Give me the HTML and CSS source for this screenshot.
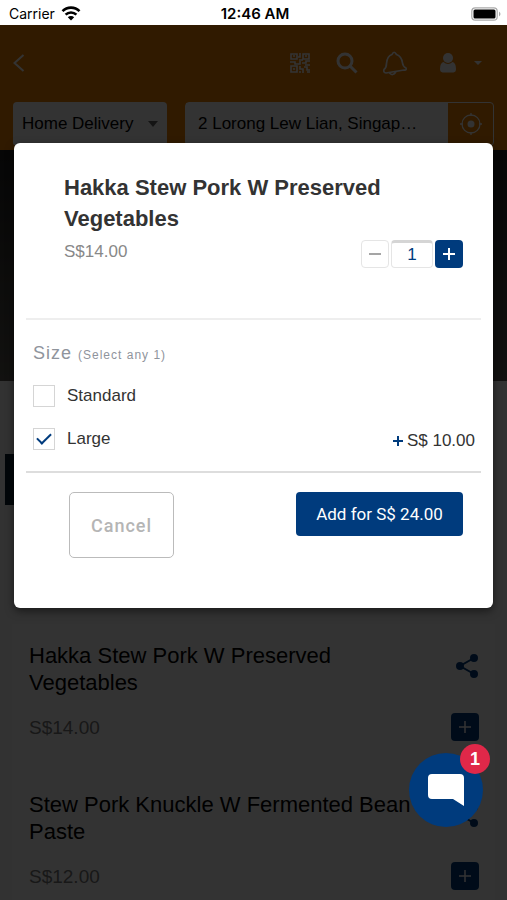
FILE: index.html
```
<!DOCTYPE html>
<html lang="en">
<head>
<meta charset="utf-8">
<meta name="viewport" content="width=device-width, initial-scale=1">
<title>Hakka Stew Pork W Preserved Vegetables</title>
<link rel="stylesheet" href="styles.css">
</head>
<body>
<div class="status">
  <div class="carrier">Carrier
    <svg width="20" height="15" viewBox="0 0 20 15" fill="none" stroke="#000" stroke-width="2.6"><path d="M1.5 5.2a12 12 0 0 1 17 0M4.6 8.6a7.8 7.8 0 0 1 10.800 0"/><path d="M10 14.500l-3.200-3.300a4.600 4.600 0 0 1 6.400 0z" fill="#000" stroke="none"/></svg>
  </div>
  <div class="clock">12:46 AM</div>
  <svg class="battery" width="30" height="14" viewBox="0 0 30 14"><rect x=".8" y=".8" width="25.400" height="12.400" rx="3.500" fill="#fff" stroke="#aaa" stroke-width="1.200"/><rect x="2.500" y="2.500" width="22" height="9" rx="1.500"/><path d="M28 4.500q3 2.500 0 5z" fill="#aaa"/></svg>
</div>
<div class="screen">
  <header class="header">
    <div class="nav">
      <button class="icon" aria-label="Back"><svg width="12" height="18" viewBox="0 0 12 18" fill="none" stroke="#fff" stroke-width="2"><path d="M10.500 1L1.500 9l9 8"/></svg></button>
      <div class="tools">
        <button class="icon" aria-label="Scan code"><svg width="20" height="20" viewBox="0 0 20 20" fill="none" stroke="#fff" stroke-width="1.600"><path d="M1 1h6v5H1zM13 1h6v5h-6zM1 13h6v6H1zM10 0v4H8M9 7h4M0 9h5v2h5V8M12 10h4V8h4M15 12h5M10 13v3h3v4M14 14h3v3h3M9 19h2M17 19h3M3 3h2M15 3h2M3 16h2"/></svg></button>
        <button class="icon" aria-label="Search"><svg width="22" height="22" viewBox="0 0 22 22" fill="none" stroke="#fff" stroke-width="3"><circle cx="9" cy="9" r="7"/><path d="M14 14l6.500 6.500"/></svg></button>
        <button class="icon" aria-label="Notifications"><svg width="26" height="26" viewBox="0 0 26 26" fill="none" stroke="#fff" stroke-width="1.700" stroke-linejoin="round"><path d="M10 4.500q2-4.500 4.500 0c4.500 1.500 5.500 5 6 8.500.3 3 1.500 4 3.500 5q1 2.500-2 2L4 23q-3-.5-2-3.500c2-1.500 2.500-3 2.500-6 .3-4 1-7.500 5.500-9zM7.500 23q3 3.500 6.500-1"/></svg></button>
        <button class="icon account" aria-label="Account"><svg width="16" height="20" viewBox="0 0 16 20" fill="#fff"><circle cx="8" cy="5" r="5"/><path d="M3.500 9q4.500 4 9 0Q16 10 16 16q0 3-2.500 3.500h-11Q0 19 0 16q0-6 3.500-7z"/></svg><svg width="8" height="4" viewBox="0 0 8 4" fill="#fff"><path d="M0 0h8L4 4z"/></svg></button>
      </div>
    </div>
    <div class="fields">
      <button class="mode">Home Delivery<svg width="10" height="6" viewBox="0 0 10 6" fill="#666"><path d="M0 0h10L5 6z"/></svg></button>
      <div class="place">
        <input class="address" aria-label="Delivery address" value="2 Lorong Lew Lian, Singap…">
        <button class="locate" aria-label="Locate me"><svg width="24" height="24" viewBox="0 0 24 24" fill="none" stroke="#fff" stroke-width="1.300"><circle cx="12" cy="12" r="9"/><path d="M12 1v3M12 20v3M1 12h3M20 12h3"/><circle cx="12" cy="12" r="3.500" fill="#fff" stroke="none"/></svg></button>
      </div>
    </div>
  </header>
  <div class="hero"></div>
  <div class="category"></div>
  <main class="menu">
    <article class="item">
      <h3>Hakka Stew Pork W Preserved Vegetables</h3>
      <button class="icon share" aria-label="Share"><svg width="24" height="24" viewBox="0 0 24 24" fill="#003b7d" stroke="#003b7d" stroke-width="2"><path d="M19 4L5 12l14 8" fill="none"/><circle cx="19" cy="4" r="3"/><circle cx="5" cy="12" r="3"/><circle cx="19" cy="20" r="3"/></svg></button>
      <p>S$14.00</p>
      <button class="square add" aria-label="Add"><svg width="12" height="12" viewBox="0 0 12 12" stroke="#fff" stroke-width="1.500"><path d="M6 0v12M0 6h12"/></svg></button>
    </article>
    <article class="item">
      <h3>Stew Pork Knuckle W Fermented Bean Paste</h3>
      <button class="icon share" aria-label="Share"><svg width="24" height="24" viewBox="0 0 24 24" fill="#003b7d" stroke="#003b7d" stroke-width="2"><path d="M19 4L5 12l14 8" fill="none"/><circle cx="19" cy="4" r="3"/><circle cx="5" cy="12" r="3"/><circle cx="19" cy="20" r="3"/></svg></button>
      <p>S$12.00</p>
      <button class="square add" aria-label="Add"><svg width="12" height="12" viewBox="0 0 12 12" stroke="#fff" stroke-width="1.500"><path d="M6 0v12M0 6h12"/></svg></button>
    </article>
  </main>
  <div class="backdrop"></div>
</div>

<form class="modal" role="dialog" aria-labelledby="dish">
  <div class="intro">
    <h2 id="dish">Hakka Stew Pork W Preserved Vegetables</h2>
    <div class="pricing">
      <span class="price">S$14.00</span>
      <div class="stepper">
        <button type="button" class="square minus" aria-label="Decrease"><svg width="12" height="12" viewBox="0 0 12 12" stroke="#a5a5a5" stroke-width="2"><path d="M0 6h12"/></svg></button>
        <input class="count" aria-label="Quantity" value="1">
        <button type="button" class="square" aria-label="Increase"><svg width="12" height="12" viewBox="0 0 12 12" stroke="#fff" stroke-width="2"><path d="M6 0v12M0 6h12"/></svg></button>
      </div>
    </div>
  </div>
  <fieldset class="options">
    <legend>Size <small>(Select any 1)</small></legend>
    <label class="option"><input type="checkbox"><span>Standard</span></label>
    <label class="option"><input type="checkbox" checked><span>Large</span><span class="extra"><svg width="10" height="10" viewBox="0 0 10 10" stroke="#003b7d" stroke-width="2"><path d="M5 0v10M0 5h10"/></svg>S$ 10.00</span></label>
  </fieldset>
  <div class="actions">
    <button type="button" class="cancel">Cancel</button>
    <button type="button" class="submit">Add for S$ 24.00</button>
  </div>
</form>

<button class="chat" aria-label="Chat, 1 new message"><svg width="38" height="34" viewBox="0 0 38 34" fill="#fff"><path d="M5 1h28q4 0 4 4v28L26 26H5q-4 0-4-4V5q0-4 4-4z"/></svg><span class="badge">1</span></button>
</body>
</html>
```
FILE: styles.css
```
* { box-sizing: border-box; margin: 0; }
body {
  min-height: 100vh;
  display: flex;
  flex-direction: column;
  font-family: "Liberation Sans", Arial, sans-serif;
  font-size: 17px;
  color: #333;
  overflow: hidden;
}
button, input { font: inherit; color: inherit; }
button { padding: 0; border: 0; display: flex; align-items: center; justify-content: center; }
svg { display: block; flex: none; }

.status {
  display: grid;
  grid-template-columns: 1fr auto 1fr;
  align-items: center;
  height: 25px;
  padding: 2px 6px 0 9px;
  font: 14px "Inter", sans-serif;
  color: #000;
}
.carrier { display: flex; align-items: center; gap: 6px; }
.clock { font-size: 15px; font-weight: 600; }
.battery { justify-self: end; }

.screen {
  position: relative;
  flex: 1;
  background: #f7f7f7;
}
.backdrop { position: absolute; inset: 0; background: rgba(0, 0, 0, .8); }

.icon { background: none; }
.header { height: 125px; padding: 24px 13px 0; background: #ee8200; }
.nav { display: flex; align-items: center; justify-content: space-between; height: 28px; }
.tools { display: flex; align-items: center; gap: 26px; }
.tools .icon:nth-child(3) { margin-left: -2px; }
.account { gap: 18px; padding: 0 12px 0 6px; }
.fields { display: flex; gap: 18px; padding-top: 25px; }
.mode {
  flex: 0 1 154px;
  height: 44px;
  padding: 0 9px;
  justify-content: space-between;
  background: #fff;
  color: #000;
  border-radius: 4px;
}
.place { display: flex; flex: 1; height: 44px; border: 1px solid #fff; border-radius: 4px; }
.address { flex: 1; min-width: 0; padding: 0 12px; border: 0; background: #fff; color: #000; }
.locate { width: 45px; background: none; }

.hero { height: 231px; background: linear-gradient(#202020, #5a5850); }
.category { width: 150px; height: 51px; margin: 73px 0 0 5px; background: #0c2030; }

.menu {
  margin: 119px 12px 0;
  padding: 0 16px 0 17px;
  background: #fff;
}
.item {
  display: grid;
  grid-template-columns: 1fr 28px;
  grid-template-rows: 54px 28px;
  row-gap: 17px;
  padding: 18px 0 32px;
}
.item h3 { padding-right: 20px; font-size: 22px; font-weight: 400; line-height: 27px; color: #000; }
.item p { font-size: 19px; line-height: 30px; color: #777; }
.share { align-self: start; justify-self: end; padding-top: 12px; }
.square { width: 28px; height: 28px; border-radius: 4px; background: #003b7d; }

.modal {
  position: absolute;
  top: 143px;
  left: 14px;
  right: 14px;
  padding: 0 12px 50px;
  border-radius: 6px;
  background: #fff;
  box-shadow: 0 3px 8px rgba(0, 0, 0, .5);
}
.intro { padding: 29px 18px 50px 38px; border-bottom: 2px solid #eee; }
.intro h2 { font-size: 22px; line-height: 31px; }
.pricing { display: flex; justify-content: space-between; padding-top: 6px; }
.price { font-size: 17px; line-height: 24px; color: #888; }
.stepper { display: flex; gap: 2px; }
.minus { background: #fff; border: 1px solid #e5e5e5; }
.count {
  width: 42px;
  height: 28px;
  padding: 0;
  border: 1px solid #e5e5e5;
  border-top: 3px solid #d5d5d5;
  border-radius: 4px;
  background: #fff;
  color: #003b7d;
  font-size: 17px;
  text-align: center;
}
.options { display: block; padding: 21px 6px 11px 7px; border: 0; border-bottom: 2px solid #ddd; min-width: 0; }
.options legend { float: left; width: 100%; margin-bottom: 7px; padding: 0; font-size: 18px; line-height: 24px; letter-spacing: 1px; color: #8f949c; }
.options small { font-size: 12px; }
.option { display: flex; clear: both; align-items: center; gap: 12px; height: 43px; }
.option input {
  appearance: none;
  width: 22px;
  height: 22px;
  margin: 0;
  border: 1px solid #d5d5d5;
  display: grid;
  place-items: center;
}
.option input:checked::before {
  content: "";
  width: 12px;
  height: 6px;
  margin-bottom: 4px;
  border: solid #003b7d;
  border-width: 0 0 2px 2px;
  transform: rotate(-45deg);
}
.extra { display: flex; align-items: center; gap: 4px; margin-left: auto; padding-top: 4px; }
.actions { display: flex; align-items: flex-start; justify-content: space-between; padding: 19px 18px 0 43px; }
.cancel {
  width: 105px;
  height: 66px;
  border: 1px solid #bbb;
  border-radius: 5px;
  background: #fff;
  color: #b5b5b5;
  font: 500 18px Roboto, sans-serif;
  letter-spacing: 1px;
}
.submit {
  width: 167px;
  height: 44px;
  border-radius: 4px;
  background: #003b7d;
  color: #fff;
  font: 17px Roboto, sans-serif;
}

.chat {
  position: fixed;
  right: 24px;
  bottom: 73px;
  width: 74px;
  height: 74px;
  border-radius: 50%;
  background: #003b7d;
}
.badge {
  position: absolute;
  top: -9px;
  right: -7px;
  width: 30px;
  height: 30px;
  border-radius: 50%;
  background: #e02849;
  color: #fff;
  font-size: 18px;
  font-weight: 700;
  line-height: 30px;
}
```
